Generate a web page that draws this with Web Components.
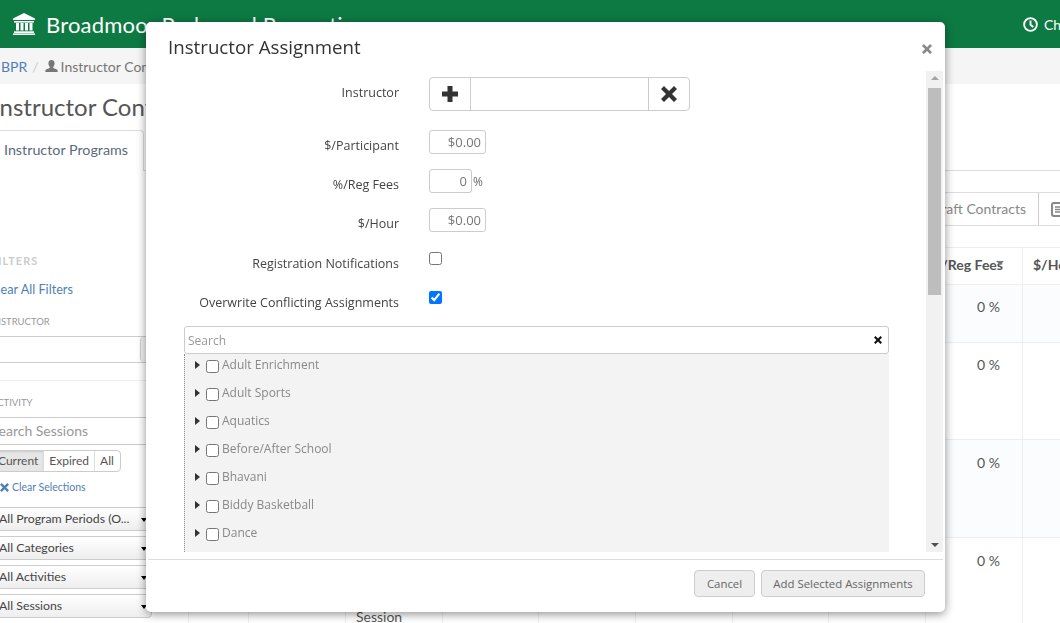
<!DOCTYPE html>
<html lang="en">
<head>
<meta charset="utf-8">
<title>Instructor Contracts</title>
<style>
  html, body { margin: 0; height: 623px; overflow: hidden; background: #fff; }
  body { font-family: Lato, sans-serif; font-size: 14px; color: #555; }
</style>
</head>
<body>
  <app-navbar></app-navbar>
  <app-breadcrumb></app-breadcrumb>
  <contract-page>
    <filter-sidebar slot="sidebar"></filter-sidebar>
    <contract-table slot="main"></contract-table>
  </contract-page>
  <assignment-modal>
    <form-row label="Instructor" style="margin-top:6px">
      <instructor-picker></instructor-picker>
    </form-row>
    <form-row label="$/Participant" style="margin-top:19px">
      <amount-box value="$0.00"></amount-box>
    </form-row>
    <form-row label="%/Reg Fees" style="margin-top:15px">
      <amount-box value="0" width="43" suffix="%"></amount-box>
    </form-row>
    <form-row label="$/Hour" style="margin-top:15px">
      <amount-box value="$0.00"></amount-box>
    </form-row>
    <form-row label="Registration Notifications" check style="margin-top:20px">
      <input type="checkbox" style="margin:0;display:block">
    </form-row>
    <form-row label="Overwrite Conflicting Assignments" check style="margin-top:20px">
      <input type="checkbox" checked style="margin:0;display:block">
    </form-row>
    <program-tree></program-tree>
  </assignment-modal>

<script>
const ICONS = {
  bank: `<path d="M11 0 L22 5.5 V7 H0 V5.5 Z" /><rect x="1" y="8" width="20" height="1.6"/><rect x="3" y="10" width="3" height="7.5"/><rect x="7.5" y="10" width="3" height="7.5"/><rect x="12" y="10" width="3" height="7.5"/><rect x="16.5" y="10" width="3" height="7.5"/><rect x="1" y="18.3" width="20" height="1.7"/><rect x="0" y="20.4" width="22" height="1.6"/>`,
  user: `<path d="M7 0 C9.4 0 10.4 1.8 10.3 3.8 C10.2 5.4 9.6 6.6 8.9 7.4 V8.7 C10.6 9.5 13 10 13.6 11 V13 H.4 V11 C1 10 3.4 9.5 5.1 8.7 V7.4 C4.4 6.6 3.8 5.4 3.7 3.8 C3.6 1.8 4.6 0 7 0 Z"/>`,
  plus: `<polygon points="5.5,0 10.5,0 10.5,5.5 16,5.5 16,10.5 10.5,10.5 10.5,16 5.5,16 5.5,10.5 0,10.5 0,5.5 5.5,5.5"/>`,
  remove: `<polygon points="3,0 8,5 13,0 16,3 11,8 16,13 13,16 8,11 3,16 0,13 5,8 0,3"/>`,
};
const icon = (name, size, box = 16, color = "currentColor") =>
  `<svg width="${size}" height="${size}" viewBox="0 0 ${box} ${box}" fill="${color}" style="display:block;flex:none">${ICONS[name]}</svg>`;

class AppNavbar extends HTMLElement {
  constructor() {
    super();
    this.attachShadow({ mode: "open" });
  }

  connectedCallback() {
    this.shadowRoot.innerHTML = `
      <style>
        :host { display: flex; align-items: center; height: 48px; background: #0e7a43; color: #fff; white-space: nowrap; overflow: hidden; }
        .bank { margin-left: 13px; }
        .brand { margin-left: 11px; font-size: 22px; letter-spacing: .2px; }
        .caret { margin-left: 12px; width: 0; height: 0; border: 5px solid transparent; border-top-color: #fff; border-bottom: 0; }
        .right { margin-left: auto; display: flex; align-items: center; gap: 6px; width: 37px; flex: none; font-size: 14px; overflow: visible; }
        .right svg { flex: none; }
      </style>
      ${icon("bank", 22, 22)}
      <span class="brand">Broadmoor Parks and Recreation</span>
      <span class="caret"></span>
      <span class="right">
        <svg width="15" height="15" viewBox="0 0 16 16" fill="none" stroke="#fff" stroke-width="2"><circle cx="8" cy="8" r="6.8"/><path d="M8 3.6 V8.2 L11 10.6"/></svg>
        <span>Change</span>
      </span>`;
    this.shadowRoot.querySelector("svg").classList.add("bank");
  }
}
customElements.define("app-navbar", AppNavbar);

class AppBreadcrumb extends HTMLElement {
  constructor() {
    super();
    this.attachShadow({ mode: "open" });
  }

  connectedCallback() {
    this.shadowRoot.innerHTML = `
      <style>
        :host { display: flex; align-items: center; height: 36px; background: #f5f5f5; color: #777; padding-left: 1px; white-space: nowrap; }
        a { color: #4f7fb5; }
        .sep { color: #ccc; margin: 0 6px 0 5px; }
        svg { margin-right: 3px; }
      </style>
      <a>BPR</a><span class="sep">/</span>${icon("user", 13, 14, "#777")}<span>Instructor Contracts</span>`;
  }
}
customElements.define("app-breadcrumb", AppBreadcrumb);

class ContractPage extends HTMLElement {
  constructor() {
    super();
    this.attachShadow({ mode: "open" });
  }

  connectedCallback() {
    this.shadowRoot.innerHTML = `
      <style>
        :host { display: block; margin-left: -40px; width: 1400px; }
        h1 { margin: 0; height: 46px; padding: 5px 0 0 33px; box-sizing: border-box; font-size: 24px; font-weight: 400; line-height: 36px; color: #555; white-space: nowrap; }
        .tabs { display: flex; height: 41px; box-sizing: border-box; border-bottom: 1px solid #ddd; }
        .tab { width: 184px; box-sizing: border-box; height: 41px; padding: 10px 0 0 44px; background: #fff; border: 1px solid #ddd; border-left: 0; border-bottom: 0; border-radius: 0 4px 0 0; color: #5a6b7d; font-size: 14.3px; white-space: nowrap; }
        .body { display: grid; grid-template-columns: 195px 1fr; }
      </style>
      <h1>Instructor Contracts</h1>
      <div class="tabs"><div class="tab">Instructor Programs</div></div>
      <div class="body">
        <slot name="sidebar"></slot>
        <slot name="main"></slot>
      </div>`;
  }
}
customElements.define("contract-page", ContractPage);

class FilterSidebar extends HTMLElement {
  constructor() {
    super();
    this.attachShadow({ mode: "open" });
  }

  get styles() {
    return `
      <style>
        :host { display: block; padding-left: 31px; white-space: nowrap; }
        .head { margin-top: 83px; font-size: 11px; font-weight: 700; letter-spacing: 1px; color: #ccc; line-height: 14px; }
        .link { color: #4f7fb5; font-size: 12.7px; line-height: 14px; }
        .small { font-size: 9.5px; color: #999; line-height: 12px; }
        .instructor { margin-top: 8px; height: 27px; box-sizing: border-box; border: 1px solid #ccc; border-right: 0; border-left: 0; display: flex; justify-content: flex-end; }
        .instructor span { width: 14px; border-left: 1px solid #ccc; border-radius: 4px 0 0 4px; background: #f3f3f3; }
        hr { border: 0; border-top: 1px solid #eee; margin: 17px 0 0; }
        .search { margin-top: 8px; height: 28px; box-sizing: border-box; border: 1px solid #ccc; border-left: 0; border-right: 0; padding: 4px 0 0 0; color: #999; line-height: 18px; }
        .group { margin-top: 5px; display: inline-flex; height: 22px; box-sizing: border-box; border: 1px solid #ccc; border-radius: 4px; font-size: 12px; line-height: 20px; color: #555; }
        .group span { padding: 0 5px; border-left: 1px solid #ddd; }
        .group span:last-child { padding-right: 6px; }
        .group .on { background: #e6e6e6; padding-left: 6px; border-left: 0; box-shadow: inset 0 1px 2px rgba(0,0,0,.12); }
        .clear { display: flex; align-items: center; gap: 3px; margin: 8px 0 0 9px; height: 14px; font-size: 10.5px; color: #4f7fb5; }
        .selects { margin-top: 13px; width: 161px; }
        .select { position: relative; box-sizing: border-box; height: 24px; margin-bottom: 5px; padding-left: 7px; border: 1px solid #ccc; border-radius: 0 0 4px 0; background: linear-gradient(#fff, #eee); font-size: 12.3px; line-height: 22px; color: #444; }
        .select::after { content: ""; position: absolute; right: 4px; top: 10px; border: 3px solid transparent; border-top: 4px solid #000; border-bottom: 0; }
      </style>`;
  }

  connectedCallback() {
    const selects = ["All Program Periods (O...", "All Categories", "All Activities", "All Sessions"];
    this.shadowRoot.innerHTML = `
      ${this.styles}
      <div class="head">FILTERS</div>
      <div class="link" style="margin-top:14px;margin-left:-2px">Clear All Filters</div>
      <div class="small" style="margin-top:20px">INSTRUCTOR</div>
      <div class="instructor"><span></span></div>
      <hr>
      <div class="small" style="margin-top:16px">ACTIVITY</div>
      <div class="search">Search Sessions</div>
      <div class="group"><span class="on">Current</span><span>Expired</span><span>All</span></div>
      <div class="clear">${icon("remove", 9, 16, "#4f7fb5")}<span>Clear Selections</span></div>
      <div class="selects">
        ${selects.map((s) => `<div class="select">${s}</div>`).join("")}
      </div>`;
  }
}
customElements.define("filter-sidebar", FilterSidebar);

class ContractTable extends HTMLElement {
  constructor() {
    super();
    this.attachShadow({ mode: "open" });
  }

  connectedCallback() {
    const rows = [
      { h: 58, tint: true, pad: 13 },
      { h: 97, pad: 13 },
      { h: 98, tint: true, pad: 14 },
      { h: 100, pad: 14, session: true },
    ];
    const cols = "34px 60px 97px 97px 96px 97px 97px 96px 97px 97px 97px";
    const cells = (row) =>
      Array.from({ length: 11 }, (_, i) => {
        if (i === 9) return `<div class="cell pct" style="padding-top:${row.pad}px">0 %</div>`;
        if (i === 3 && row.session) return `<div class="cell"><div class="session">Session</div></div>`;
        return `<div class="cell"></div>`;
      }).join("");
    this.shadowRoot.innerHTML = `
      <style>
        :host { display: block; padding-top: 22px; }
        .toolbar { display: flex; margin-left: 761px; height: 34px; box-sizing: border-box; border-top: 1px solid #ddd; border-bottom: 1px solid #ddd; color: #888; line-height: 32px; margin-top: -1px; }
        .toolbar .btn { width: 123px; box-sizing: border-box; text-align: right; padding-right: 12px; border-right: 1px solid #ccc; }
        .toolbar .doc { padding: 9px 0 0 12px; }
        .toolbar svg { display: block; }
        .row { display: grid; grid-template-columns: ${cols}; border-bottom: 1px solid #eee; box-sizing: border-box; }
        .head { height: 38px; border-top: 1px solid #eee; margin-top: 21px; font-weight: 700; color: #555; }
        .tint { background: #fbfcfe; }
        .cell { border-right: 1px solid #eee; box-sizing: border-box; }
        .pct { padding-left: 51px; line-height: 17px; }
        .head .cell { line-height: 34px; white-space: nowrap; }
        .head .fees { padding-left: 0; text-align: right; padding-right: 19px; position: relative; }
        .head .fees::after { content: ""; position: absolute; right: 18px; top: 13px; border: 4px solid transparent; border-top: 4px solid #777; border-bottom: 0; }
        .head .hour { padding-left: 10px; }
        .session { margin: 70px 0 0 10px; line-height: 18px; }
      </style>
      <div class="toolbar">
        <div class="btn">Draft Contracts</div>
        <div class="doc">
          <svg width="17" height="15" viewBox="0 0 17 15" fill="none" stroke="#888" stroke-width="2"><rect x="1" y="1" width="15" height="13" rx="2"/><path d="M4 5h9M4 7.5h9M4 10h9" stroke-width="1.3"/></svg>
        </div>
      </div>
      <div class="row head">
        ${Array.from({ length: 11 }, (_, i) =>
          i === 9 ? `<div class="cell fees">%/Reg Fees</div>` :
          i === 10 ? `<div class="cell hour">$/Hour</div>` :
          `<div class="cell"></div>`).join("")}
      </div>
      ${rows.map((r) => `<div class="row ${r.tint ? "tint" : ""}" style="height:${r.h}px">${cells(r)}</div>`).join("")}`;
  }
}
customElements.define("contract-table", ContractTable);

class AssignmentModal extends HTMLElement {
  constructor() {
    super();
    this.attachShadow({ mode: "open" });
  }

  connectedCallback() {
    this.shadowRoot.innerHTML = `
      <style>
        :host { position: fixed; left: 146px; top: 22px; width: 799px; height: 590px; box-sizing: border-box; padding: 0 2px; display: flex; flex-direction: column; background: #fff; border-radius: 5px; box-shadow: 0 2px 10px rgba(0,0,0,.45); font-family: "Open Sans", sans-serif; font-size: 12px; color: #444; }
        header { height: 49px; flex: none; display: flex; align-items: center; justify-content: space-between; padding: 0 11px 0 20px; box-sizing: border-box; }
        h4 { margin: 0; font-size: 18.7px; font-weight: 500; color: #333; }
        .close { color: #888; margin-top: 4px; }
        .scroll { height: 481px; flex: none; display: flex; overflow: hidden; }
        .content { flex: 1; min-width: 0; }
        .bar { width: 17px; flex: none; background: #f1f1f1; position: relative; }
        .thumb { position: absolute; left: 2px; right: 2px; top: 17px; height: 207px; background: #bdbdbd; }
        .up, .down { position: absolute; left: 5px; border: 4px solid transparent; }
        .up { top: 5px; border-top: 0; border-bottom: 4px solid #a3a3a3; }
        .down { bottom: 5px; border-bottom: 0; border-top: 4px solid #505050; }
        footer { margin-top: 7px; flex: 1; border-top: 1px solid #ddd; display: flex; justify-content: flex-end; gap: 6px; padding: 10px 18px 0 0; align-items: flex-start; }
        button { height: 27px; box-sizing: border-box; border: 1px solid #ccc; border-radius: 4px; background: #eee; color: #666; font: 11.4px "Open Sans", sans-serif; padding: 0; }
        .cancel { width: 61px; }
        .add { width: 164px; }
      </style>
      <header>
        <h4>Instructor Assignment</h4>
        <span class="close">${icon("remove", 10)}</span>
      </header>
      <div class="scroll">
        <div class="content"><slot></slot></div>
        <div class="bar"><span class="up"></span><span class="thumb"></span><span class="down"></span></div>
      </div>
      <footer>
        <button class="cancel">Cancel</button>
        <button class="add">Add Selected Assignments</button>
      </footer>`;
  }
}
customElements.define("assignment-modal", AssignmentModal);

class FormRow extends HTMLElement {
  constructor() {
    super();
    this.attachShadow({ mode: "open" });
  }

  connectedCallback() {
    const check = this.hasAttribute("check");
    this.shadowRoot.innerHTML = `
      <style>
        :host { display: grid; grid-template-columns: 251px auto; column-gap: 30px; align-items: start; height: ${check ? "19px" : "auto"}; }
        label { text-align: right; padding-top: ${check ? 4 : 8}px; line-height: 16px; white-space: nowrap; font-size: 12.5px; color: #444; }
      </style>
      <label>${this.getAttribute("label")}</label>
      <div><slot></slot></div>`;
  }
}
customElements.define("form-row", FormRow);

class InstructorPicker extends HTMLElement {
  constructor() {
    super();
    this.attachShadow({ mode: "open" });
  }

  connectedCallback() {
    this.shadowRoot.innerHTML = `
      <style>
        :host { display: flex; width: 261px; height: 34px; box-sizing: border-box; border: 1px solid #ccc; border-radius: 4px; color: #333; }
        .btn { width: 40px; display: flex; align-items: center; justify-content: center; flex: none; }
        .input { flex: 1; border-left: 1px solid #ccc; border-right: 1px solid #ccc; }
      </style>
      <div class="btn">${icon("plus", 16)}</div>
      <div class="input"></div>
      <div class="btn">${icon("remove", 16)}</div>`;
  }
}
customElements.define("instructor-picker", InstructorPicker);

class AmountBox extends HTMLElement {
  constructor() {
    super();
    this.attachShadow({ mode: "open" });
  }

  connectedCallback() {
    const width = this.getAttribute("width") || 57;
    const suffix = this.getAttribute("suffix");
    this.shadowRoot.innerHTML = `
      <style>
        :host { display: flex; align-items: center; height: 24px; font-size: 13px; color: #777; }
        .box { width: ${width}px; height: 24px; box-sizing: border-box; border: 1px solid #ccc; border-radius: 3px; text-align: right; padding-right: 4px; line-height: 23px; }
        .suffix { margin-left: 1px; font-size: 12px; color: #666; }
      </style>
      <div class="box">${this.getAttribute("value")}</div>
      ${suffix ? `<span class="suffix">${suffix}</span>` : ""}`;
  }
}
customElements.define("amount-box", AmountBox);

class TreeRow extends HTMLElement {
  constructor() {
    super();
    this.attachShadow({ mode: "open" });
  }

  connectedCallback() {
    this.shadowRoot.innerHTML = `
      <style>
        :host { display: flex; align-items: flex-start; height: 28px; box-sizing: border-box; padding-left: 10px; font-size: 12px; color: #888; }
        .arrow { width: 0; height: 0; margin-top: 7px; border: 4px solid transparent; border-left: 5px solid #333; border-right: 0; }
        input { margin: 6px 0 0 6px; flex: none; }
        span { margin: 3px 0 0 3px; line-height: 16px; }
      </style>
      <i class="arrow"></i><input type="checkbox"><span>${this.getAttribute("label")}</span>`;
  }
}
customElements.define("tree-row", TreeRow);

class ProgramTree extends HTMLElement {
  constructor() {
    super();
    this.attachShadow({ mode: "open" });
  }

  connectedCallback() {
    const items = ["Adult Enrichment", "Adult Sports", "Aquatics", "Before/After School", "Bhavani", "Biddy Basketball", "Dance"];
    this.shadowRoot.innerHTML = `
      <style>
        :host { display: block; margin: 16px 0 0 36px; width: 705px; }
        .search { display: flex; align-items: center; justify-content: space-between; height: 28px; box-sizing: border-box; border: 1px solid #ccc; border-radius: 3px; padding: 0 6px 0 3px; color: #999; font-size: 12px; }
        .tree { background: #f3f3f3; border-left: 1px dotted #888; padding-bottom: 10px; }
      </style>
      <div class="search"><span>Search</span>${icon("remove", 8, 16, "#111")}</div>
      <div class="tree">
        ${items.map((i) => `<tree-row label="${i}"></tree-row>`).join("")}
      </div>`;
  }
}
customElements.define("program-tree", ProgramTree);
</script>
</body>
</html>
